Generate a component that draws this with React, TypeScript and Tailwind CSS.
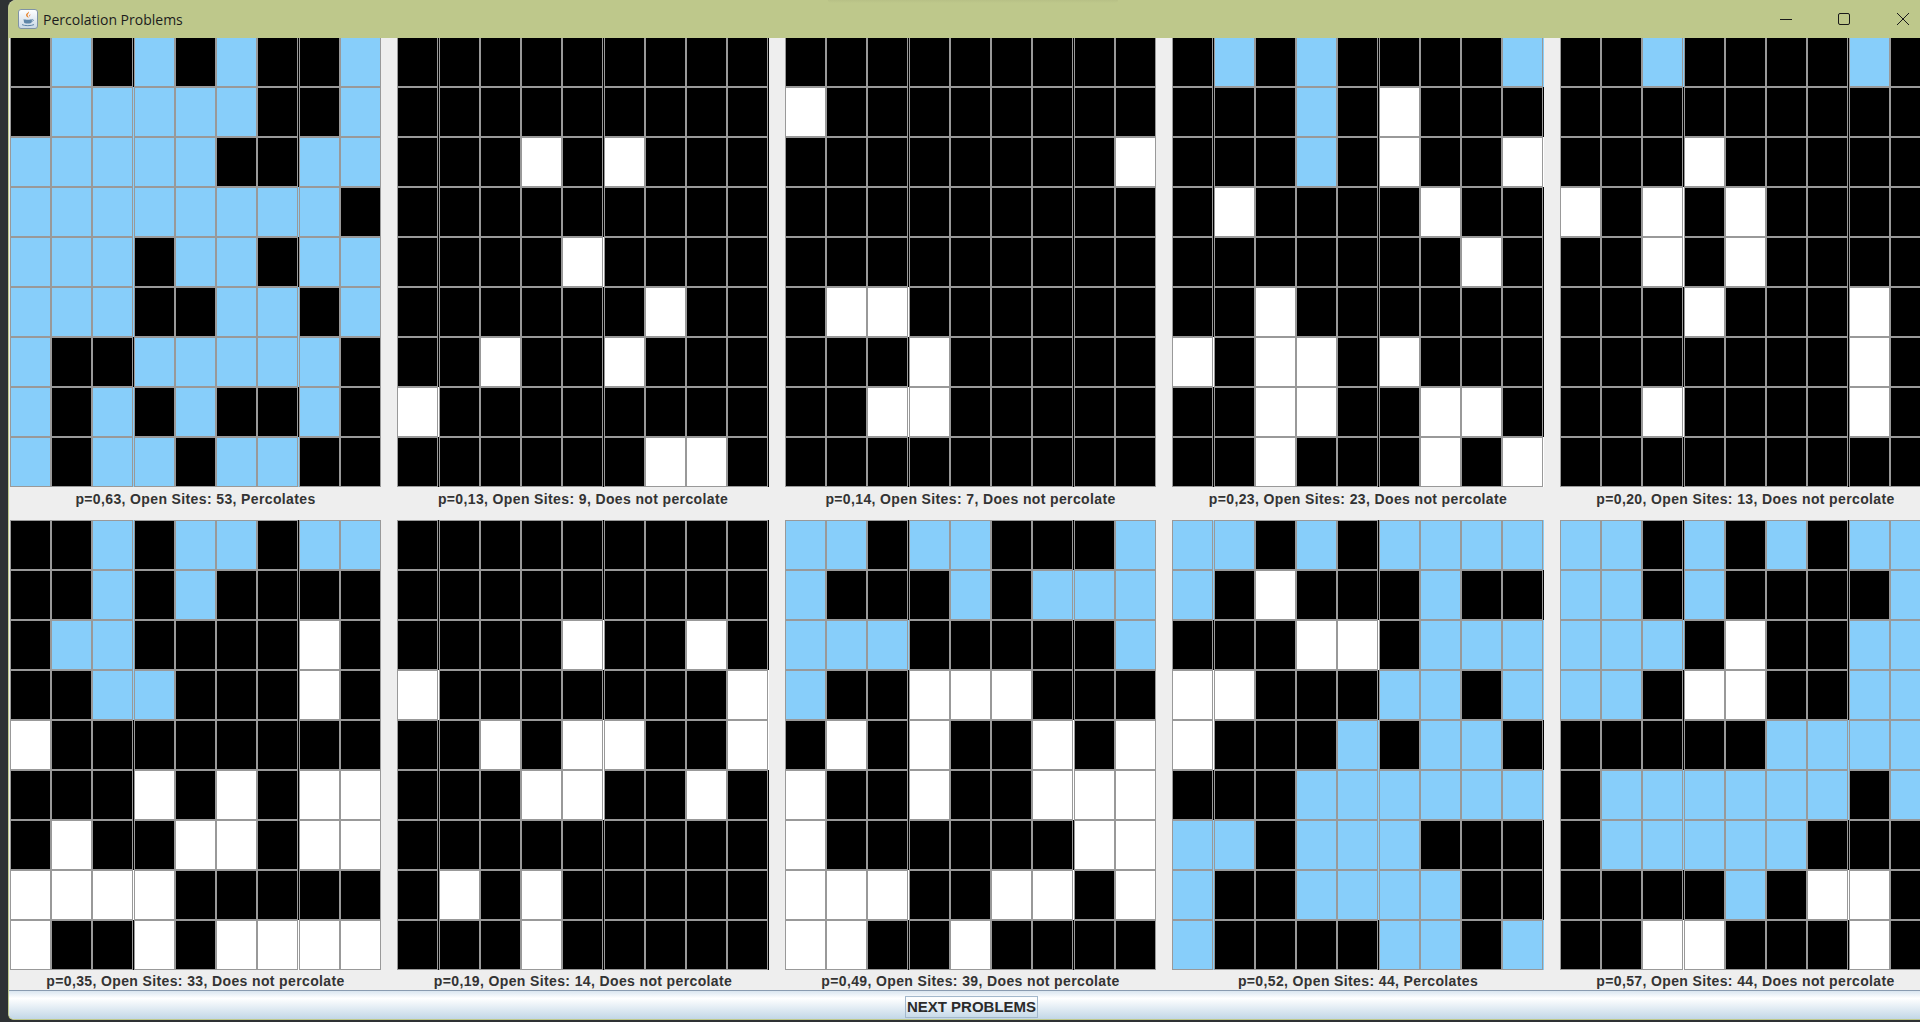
const A = "grid-cols-[41px_41px_42px_41px_41px_41px_42px_41px_41px]";
const B = "grid-cols-[42px_41px_41px_41px_42px_41px_41px_41px_42px]";

const fill: Record<string, string> = { B: "bg-black", L: "bg-[#87cefa]", W: "bg-white" };

type Panel = { rows: string[]; label: string; cols: string };

const top: Panel[] = [
  {
    cols: A,
    label: "p=0,63, Open Sites: 53, Percolates",
    rows: ["BLBLBLBBL", "BLLLLLBBL", "LLLLLBBLL", "LLLLLLLLB", "LLLBLLBLL", "LLLBBLLBL", "LBBLLLLLB", "LBLBLBBLB", "LBLLBLLBB"],
  },
  {
    cols: B,
    label: "p=0,13, Open Sites: 9, Does not percolate",
    rows: ["BBBBBBBBB", "BBBBBBBBB", "BBBWBWBBB", "BBBBBBBBB", "BBBBWBBBB", "BBBBBBWBB", "BBWBBWBBB", "WBBBBBBBB", "BBBBBBWWB"],
  },
  {
    cols: A,
    label: "p=0,14, Open Sites: 7, Does not percolate",
    rows: ["BBBBBBBBB", "WBBBBBBBB", "BBBBBBBBW", "BBBBBBBBB", "BBBBBBBBB", "BWWBBBBBB", "BBBWBBBBB", "BBWWBBBBB", "BBBBBBBBB"],
  },
  {
    cols: B,
    label: "p=0,23, Open Sites: 23, Does not percolate",
    rows: ["BLBLBBBBL", "BBBLBWBBB", "BBBLBWBBW", "BWBBBBWBB", "BBBBBBBWB", "BBWBBBBBB", "WBWWBWBBB", "BBWWBBWWB", "BBWBBBWBW"],
  },
  {
    cols: A,
    label: "p=0,20, Open Sites: 13, Does not percolate",
    rows: ["BBLBBBBLB", "BBBBBBBBB", "BBBWBBBBB", "WBWBWBBBB", "BBWBWBBBB", "BBBWBBBWB", "BBBBBBBWB", "BBWBBBBWB", "BBBBBBBBB"],
  },
];

const bottom: Panel[] = [
  {
    cols: A,
    label: "p=0,35, Open Sites: 33, Does not percolate",
    rows: ["BBLBLLBLL", "BBLBLBBBB", "BLLBBBBWB", "BBLLBBBWB", "WBBBBBBBB", "BBBWBWBWW", "BWBBWWBWW", "WWWWBBBBB", "WBBWBWWWW"],
  },
  {
    cols: B,
    label: "p=0,19, Open Sites: 14, Does not percolate",
    rows: ["BBBBBBBBB", "BBBBBBBBB", "BBBBWBBWB", "WBBBBBBBW", "BBWBWWBBW", "BBBWWBBWB", "BBBBBBBBB", "BWBWBBBBB", "BBBWBBBBB"],
  },
  {
    cols: A,
    label: "p=0,49, Open Sites: 39, Does not percolate",
    rows: ["LLBLLBBBL", "LBBBLBLLL", "LLLBBBBBL", "LBBWWWBBB", "BWBWBBWBW", "WBBWBBWWW", "WBBBBBBWW", "WWWBBWWBW", "WWBBWBBBB"],
  },
  {
    cols: B,
    label: "p=0,52, Open Sites: 44, Percolates",
    rows: ["LLBLBLLLL", "LBWBBBLBB", "BBBWWBLLL", "WWBBBLLBL", "WBBBLBLLB", "BBBLLLLLL", "LLBLLLBBB", "LBBLLLLBB", "LBBBBLLBL"],
  },
  {
    cols: A,
    label: "p=0,57, Open Sites: 44, Does not percolate",
    rows: ["LLBLBLBLL", "LLBLBBBBL", "LLLBWBBLL", "LLBWWBBLL", "BBBBBLLLL", "BLLLLLLBL", "BLLLLLBBB", "BBBBLBWWB", "BBWWBBBWB"],
  },
];

function Percolation({ panel, labelClass }: { panel: Panel; labelClass: string }) {
  return (
    <div className="flex flex-col shrink-0">
      <div className={`grid grid-rows-[repeat(9,50px)] ${panel.cols}`}>
        {panel.rows.flatMap((row, r) =>
          row.split("").map((c, i) => (
            <div key={`${r}-${i}`} className={fill[c]}>
              <div className="w-[41px] h-full border border-[#999999]" />
            </div>
          ))
        )}
      </div>
      <div
        className={`flex justify-center whitespace-nowrap text-[#333333] font-bold text-[14px] tracking-[0.37px] leading-5 ${labelClass}`}
      >
        {panel.label}
      </div>
    </div>
  );
}

function JavaIcon() {
  return (
    <svg width="20" height="20" viewBox="0 0 20 20" className="shrink-0">
      <defs>
        <linearGradient id="jbg" x1="0" y1="0" x2="0" y2="1">
          <stop offset="0" stopColor="#ffffff" />
          <stop offset="1" stopColor="#c9d8e6" />
        </linearGradient>
      </defs>
      <rect x="0.5" y="0.5" width="19" height="19" rx="2.5" fill="url(#jbg)" stroke="#7f93a5" />
      <path d="M10.5 2.5c1.5 1.6-1.6 2.6-.8 4.2.3.7 1 1.2 1 2-1.6-.6-3-1.6-2.6-3.2.3-1.2 2.2-1.6 2.4-3z" fill="#e8842c" />
      <path d="M12.3 5.2c.4 1-1 1.4-.7 2.6l-.4-.5c-.3-.8.5-1.4 1.1-2.1z" fill="#d9682a" />
      <path d="M5.5 10.2c1.8.6 7 .6 8.6 0l-.5 3c-.3 1-1.5 1.4-3.8 1.4-2.2 0-3.5-.4-3.8-1.4z" fill="#5f86a8" />
      <path d="M14 10.6c1.4-.3 2 .8.8 1.5-.4.2-.9.4-1.5.5" fill="none" stroke="#5f86a8" strokeWidth="0.8" />
      <path d="M4 15.6c2.5 1.4 9 1.4 12 0" fill="none" stroke="#5f86a8" strokeWidth="1" />
    </svg>
  );
}

export default function App() {
  return (
    <div
      className="w-[1920px] h-[1022px] overflow-hidden bg-[#2e3134] pl-2"
      style={{ fontFamily: '"Liberation Sans", Arial, sans-serif' }}
    >
      <div className="h-[1020px] flex flex-col bg-[#eeeeee] border-l border-b border-[#bec88b] rounded-tl-lg rounded-bl-md overflow-hidden relative">
        <div className="relative z-10 h-[38px] -ml-px shrink-0 bg-[#bec88b] flex items-center pl-[10px]">
          <div className="absolute left-[820px] top-0 w-[290px] h-[3px] bg-gradient-to-b from-[#b7c086] to-[#bec88b] rounded-b-full" />
          <JavaIcon />
          <span
            className="ml-[5px] text-[14px] text-[#1c1c1c] whitespace-nowrap"
            style={{ fontFamily: '"Open Sans", sans-serif' }}
          >
            Percolation Problems
          </span>
          <div className="ml-auto flex items-center h-full pr-[11px]">
            <svg width="12" height="12" viewBox="0 0 12 12" className="mr-[46px]">
              <path d="M0 6.5h12" stroke="#1a1a1a" strokeWidth="1" />
            </svg>
            <svg width="12" height="12" viewBox="0 0 12 12" className="mr-[47px]">
              <rect x="0.5" y="0.5" width="11" height="11" rx="1.5" fill="none" stroke="#1a1a1a" strokeWidth="1" />
            </svg>
            <svg width="12" height="12" viewBox="0 0 12 12">
              <path d="M0 0l12 12M12 0L0 12" stroke="#1a1a1a" strokeWidth="1" />
            </svg>
          </div>
        </div>

        <div className="-mt-px pl-px flex gap-4 shrink-0">
          {top.map((p) => (
            <Percolation key={p.label} panel={p} labelClass="h-[33px] pt-[2px]" />
          ))}
        </div>
        <div className="pl-px flex gap-4 shrink-0">
          {bottom.map((p) => (
            <Percolation key={p.label} panel={p} labelClass="h-[20px] pt-px" />
          ))}
        </div>

        <div className="h-[30px] border-t border-[#8a9bb0] bg-gradient-to-b from-[#dbe6f0] via-[#ffffff] via-25% to-[#bfd5e6] flex items-center justify-center shrink-0 -ml-px pl-[15px]">
          <div className="h-[22px] mt-[3px] border border-[#a3b8cc] flex items-center px-px text-[15px] font-bold text-[#2b2b2b] whitespace-nowrap">
            NEXT PROBLEMS
          </div>
        </div>
      </div>
    </div>
  );
}
